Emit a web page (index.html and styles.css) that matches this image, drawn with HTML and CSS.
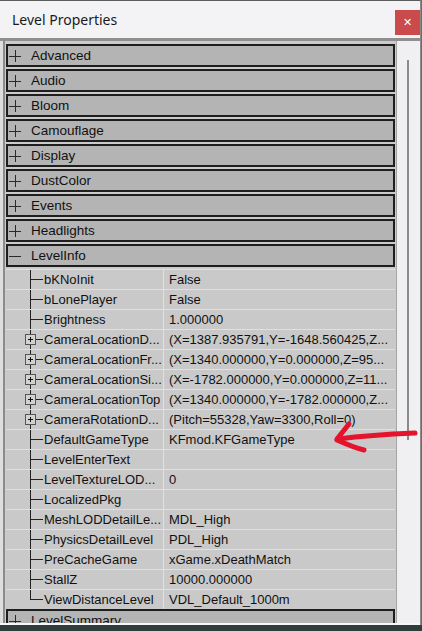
FILE: index.html
```html
<!DOCTYPE html>
<html lang="en">
<head>
  <meta charset="UTF-8" />
  <title>Level Properties</title>
  <link rel="stylesheet" href="styles.css">
</head>
<body>
  <div class="window">
    <div class="titlebar">
      <span class="title">Level Properties</span>
      <button class="close">&#x2715;</button>
    </div>
    <div class="content">
      <div class="list">
        <div class="cat"><svg class="expander" width="12" height="12"><path d="M0 6.5h12M6.5 0v12"/></svg><span>Advanced</span></div>
        <div class="cat"><svg class="expander" width="12" height="12"><path d="M0 6.5h12M6.5 0v12"/></svg><span>Audio</span></div>
        <div class="cat"><svg class="expander" width="12" height="12"><path d="M0 6.5h12M6.5 0v12"/></svg><span>Bloom</span></div>
        <div class="cat"><svg class="expander" width="12" height="12"><path d="M0 6.5h12M6.5 0v12"/></svg><span>Camouflage</span></div>
        <div class="cat"><svg class="expander" width="12" height="12"><path d="M0 6.5h12M6.5 0v12"/></svg><span>Display</span></div>
        <div class="cat"><svg class="expander" width="12" height="12"><path d="M0 6.5h12M6.5 0v12"/></svg><span>DustColor</span></div>
        <div class="cat"><svg class="expander" width="12" height="12"><path d="M0 6.5h12M6.5 0v12"/></svg><span>Events</span></div>
        <div class="cat"><svg class="expander" width="12" height="12"><path d="M0 6.5h12M6.5 0v12"/></svg><span>Headlights</span></div>
        <div class="cat"><svg class="expander" width="12" height="12"><path d="M0 6.5h12"/></svg><span>LevelInfo</span></div>

        <div class="props">
          <div class="prop first"><div class="name"><span class="toggle none"></span>bKNoInit</div><div class="value">False</div></div>
          <div class="prop"><div class="name"><span class="toggle none"></span>bLonePlayer</div><div class="value">False</div></div>
          <div class="prop"><div class="name"><span class="toggle none"></span>Brightness</div><div class="value">1.000000</div></div>
          <div class="prop"><div class="name"><svg class="toggle" width="11" height="11"><rect x=".5" y=".5" width="10" height="10"/><path d="M3 5.5h5M5.5 3v5"/></svg>CameraLocationD...</div><div class="value">(X=1387.935791,Y=-1648.560425,Z...</div></div>
          <div class="prop"><div class="name"><svg class="toggle" width="11" height="11"><rect x=".5" y=".5" width="10" height="10"/><path d="M3 5.5h5M5.5 3v5"/></svg>CameraLocationFr...</div><div class="value">(X=1340.000000,Y=0.000000,Z=95...</div></div>
          <div class="prop"><div class="name"><svg class="toggle" width="11" height="11"><rect x=".5" y=".5" width="10" height="10"/><path d="M3 5.5h5M5.5 3v5"/></svg>CameraLocationSi...</div><div class="value">(X=-1782.000000,Y=0.000000,Z=11...</div></div>
          <div class="prop"><div class="name"><svg class="toggle" width="11" height="11"><rect x=".5" y=".5" width="10" height="10"/><path d="M3 5.5h5M5.5 3v5"/></svg>CameraLocationTop</div><div class="value">(X=1340.000000,Y=-1782.000000,Z...</div></div>
          <div class="prop"><div class="name"><svg class="toggle" width="11" height="11"><rect x=".5" y=".5" width="10" height="10"/><path d="M3 5.5h5M5.5 3v5"/></svg>CameraRotationD...</div><div class="value">(Pitch=55328,Yaw=3300,Roll=0)</div></div>
          <div class="prop"><div class="name"><span class="toggle none"></span>DefaultGameType</div><div class="value">KFmod.KFGameType</div></div>
          <div class="prop"><div class="name"><span class="toggle none"></span>LevelEnterText</div><div class="value"></div></div>
          <div class="prop"><div class="name"><span class="toggle none"></span>LevelTextureLOD...</div><div class="value">0</div></div>
          <div class="prop"><div class="name"><span class="toggle none"></span>LocalizedPkg</div><div class="value"></div></div>
          <div class="prop"><div class="name"><span class="toggle none"></span>MeshLODDetailLe...</div><div class="value">MDL_High</div></div>
          <div class="prop"><div class="name"><span class="toggle none"></span>PhysicsDetailLevel</div><div class="value">PDL_High</div></div>
          <div class="prop"><div class="name"><span class="toggle none"></span>PreCacheGame</div><div class="value">xGame.xDeathMatch</div></div>
          <div class="prop"><div class="name"><span class="toggle none"></span>StallZ</div><div class="value">10000.000000</div></div>
          <div class="prop last"><div class="name"><span class="toggle none"></span>ViewDistanceLevel</div><div class="value">VDL_Default_1000m</div></div>
        </div>

        <div class="cat"><svg class="expander" width="12" height="12"><path d="M0 6.5h12M6.5 0v12"/></svg><span>LevelSummary</span></div>
      </div>
      <div class="scrollbar"><div class="thumb"></div></div>
    </div>
  </div>
  <div class="desktop"></div>

  <svg class="arrow" width="422" height="631">
    <path d="M415 433 C392 434 362 436 338 439"/>
    <path d="M349 424 C345 429 341 434 337 439"/>
    <path d="M337 440 C346 444 355 448 364 450"/>
  </svg>
</body>
</html>
```

FILE: styles.css
```css
* {
  margin: 0;
  padding: 0;
  box-sizing: border-box;
}

body {
  width: 422px;
  height: 631px;
  overflow: hidden;
  background-color: #6d6d6d;
  font-family: 'Liberation Sans', Arial, sans-serif;
  color: #111;
}

.window {
  width: 421px;
  height: 625px;
  display: flex;
  flex-direction: column;
  border-top: 1px solid #5c5c5c;
  border-right: 1px solid #8a8a8a;
  background-color: #f3f3f6;
}

.titlebar {
  height: 37px;
  display: flex;
  justify-content: space-between;
  align-items: flex-start;
  background-color: #f3f3f6;
}

.title {
  font-family: 'Noto Sans', 'Liberation Sans', sans-serif;
  font-size: 14px;
  color: #1a1a1a;
  margin: 9px 0 0 12px;
}

.close {
  width: 25px;
  height: 25px;
  margin-top: 9px;
  border: none;
  background-color: #c94b4b;
  color: #fff;
  font-family: 'DejaVu Sans', sans-serif;
  font-size: 11px;
  font-weight: bold;
}

.content {
  flex: 1;
  display: flex;
  overflow: hidden;
  border-top: 3px solid #8f8f8f;
  border-bottom: 2px solid #f7f7f7;
  padding-left: 3px;
  background-color: #dedede;
}

.list {
  width: 393px;
  border-left: 2px solid #8c8c8c;
  padding: 3px 1px 0 1px;
  background-color: #cbcbcb;
}

.cat {
  height: 23px;
  margin-bottom: 2px;
  display: flex;
  align-items: center;
  padding-left: 1px;
  border: 2px solid #1e1e1e;
  background-color: #b4b4b4;
  font-size: 13.5px;
}

.expander {
  margin-right: 10px;
  flex-shrink: 0;
}

.expander path {
  stroke: #2a2a2a;
  stroke-width: 1;
  fill: none;
}

.props {
  margin-bottom: 0;
}

.prop {
  height: 20px;
  display: flex;
  border-top: 1px solid #e0e0e0;
  background-color: #c9c9c9;
  font-size: 13px;
}

.name {
  width: 158px;
  display: flex;
  align-items: center;
  padding-left: 19px;
  white-space: nowrap;
  overflow: hidden;
  border-right: 1px solid #e0e0e0;
  background:
    linear-gradient(#222, #222) 24px 0 / 1px 100% no-repeat,
    linear-gradient(#222, #222) 24px 9px / 13px 1px no-repeat;
}

.prop.last .name {
  background:
    linear-gradient(#222, #222) 24px 0 / 1px 10px no-repeat,
    linear-gradient(#222, #222) 24px 9px / 13px 1px no-repeat;
}

.toggle {
  width: 11px;
  height: 11px;
  margin-right: 8px;
  flex-shrink: 0;
}

.toggle.none {
  display: inline-block;
}

.toggle rect {
  fill: #d2d2d2;
  stroke: #555;
}

.toggle path {
  stroke: #111;
  fill: none;
}

.value {
  flex: 1;
  padding-left: 5px;
  display: flex;
  align-items: center;
  white-space: nowrap;
  overflow: hidden;
}

.scrollbar {
  width: 24px;
  border-left: 1px solid #a4a4a4;
  background-color: #f0f0f2;
  padding: 19px 0 0 10px;
}

.thumb {
  width: 2px;
  height: 380px;
  background-color: #8a8a8a;
}

.desktop {
  height: 6px;
  background-color: #2f3d3b;
}

.arrow {
  position: absolute;
  left: 0;
  top: 0;
  pointer-events: none;
}

.arrow path {
  fill: none;
  stroke: #e5132b;
  stroke-width: 5;
  stroke-linecap: round;
}
```
